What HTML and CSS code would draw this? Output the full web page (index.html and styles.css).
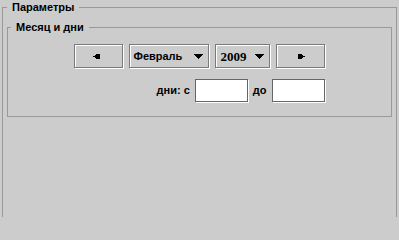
FILE: index.html
```html
<!DOCTYPE html>
<html lang="ru">
<head>
<meta charset="utf-8">
<title>Параметры</title>
<link rel="stylesheet" href="styles.css">
</head>
<body>
<fieldset class="group outer">
  <legend class="group-title">Параметры</legend>
  <fieldset class="group inner">
    <legend class="group-title">Месяц и дни</legend>
    <div class="controls">
      <div class="nav-row">
        <button class="btn prev" type="button" aria-label="Назад">
          <svg class="nav-arrow" width="7" height="5" viewBox="0 0 7 5"><polygon points="0,2.5 4,0 7,0 7,5 4,5" fill="#000"/></svg>
        </button>
        <div class="combo month">
          <span class="combo-text">Февраль</span>
          <svg class="drop" width="9" height="5" viewBox="0 0 9 5"><polygon points="0,0 9,0 4.5,5" fill="#000"/></svg>
        </div>
        <div class="combo year">
          <span class="combo-text year-text">2009</span>
          <svg class="drop" width="9" height="5" viewBox="0 0 9 5"><polygon points="0,0 9,0 4.5,5" fill="#000"/></svg>
        </div>
        <button class="btn next" type="button" aria-label="Вперёд">
          <svg class="nav-arrow" width="7" height="5" viewBox="0 0 7 5"><polygon points="7,2.5 3,0 0,0 0,5 3,5" fill="#000"/></svg>
        </button>
      </div>
      <div class="days-row">
        <span class="label">дни: с</span>
        <input class="field" type="text">
        <span class="label">до</span>
        <input class="field" type="text">
      </div>
    </div>
  </fieldset>
</fieldset>
</body>
</html>
```

FILE: styles.css
```css
html, body {
  margin: 0;
  padding: 0;
  height: 217px;
  overflow: hidden;
  background: #cccccc;
}

body {
  font-family: "Liberation Sans", Arial, sans-serif;
  font-size: 11px;
  font-weight: bold;
  color: #000;
}

.group {
  box-sizing: border-box;
  min-width: 0;
  border: 1px solid #999999;
}

.group-title {
  height: 15px;
  line-height: 15px;
  padding: 0 5px;
  font-size: 11px;
  font-weight: bold;
}

.outer {
  margin: 0 2px;
  padding: 5px 4px 0 4px;
  height: 217px;
  border-bottom: none;
}

.inner {
  margin: 0;
  padding: 9px 0 13px 0;
}

.inner > .group-title {
  margin-left: 3px;
}

.controls {
  display: flex;
  flex-direction: column;
  align-items: flex-end;
  width: max-content;
  margin: 0 auto;
  padding: 0 1px 1px 0;
}

.nav-row {
  display: flex;
  gap: 6px;
}

.btn,
.combo {
  box-sizing: border-box;
  height: 24px;
  border: 1px solid #7a7a7a;
  box-shadow: 1px 1px 0 #fff, inset 1px 1px 0 #fff;
  background: #cccccc;
  display: flex;
  align-items: center;
}

.btn {
  width: 49px;
  padding: 0;
  margin: 0;
  justify-content: center;
  font: inherit;
  appearance: none;
}

.prev .nav-arrow {
  margin-right: 4px;
}

.next .nav-arrow {
  margin-left: 2px;
}

.nav-arrow,
.drop {
  display: block;
  shape-rendering: crispEdges;
}

.combo {
  justify-content: space-between;
  padding: 0 5px 0 4px;
}

.month {
  width: 80px;
}

.year {
  width: 55px;
  padding-left: 5px;
}

.combo-text {
  font-size: 11px;
  line-height: 13px;
}

.year-text {
  font-family: "Liberation Serif", "Times New Roman", serif;
  font-size: 13px;
}

.days-row {
  display: flex;
  align-items: center;
  gap: 5px;
  margin-top: 11px;
}

.label {
  line-height: 13px;
}

.field {
  box-sizing: border-box;
  width: 53px;
  height: 23px;
  margin: 0;
  padding: 0;
  border: 1px solid #666666;
  box-shadow: 1px 1px 0 #fff;
  background: #fff;
  outline: none;
}
```
